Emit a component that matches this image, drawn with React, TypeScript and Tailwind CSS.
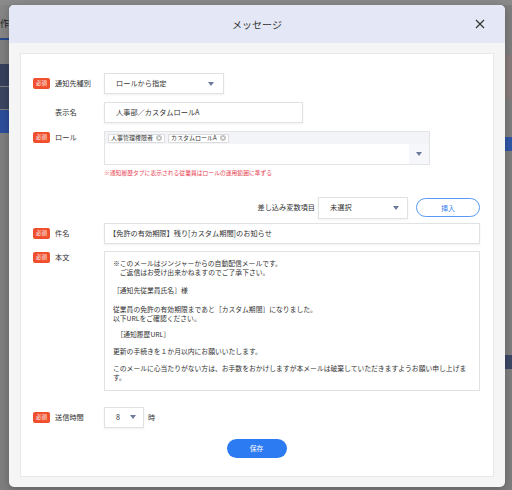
import React from "react";

const font = { fontFamily: '"Noto Sans CJK JP", "Noto Sans", sans-serif' };

function Caret() {
  return (
    <svg width="6" height="4" viewBox="0 0 6 4" className="shrink-0">
      <path d="M0 0 L6 0 L3 4 Z" fill="#6d7a9c" />
    </svg>
  );
}

function Badge() {
  return (
    <span className="inline-flex items-center justify-center w-[17px] h-[11px] rounded-[2px] bg-[#ef4f2d] text-white text-[5.5px] leading-none shrink-0">
      必須
    </span>
  );
}

function TagX() {
  return (
    <svg width="6" height="6" viewBox="0 0 6 6" className="shrink-0">
      <circle cx="3" cy="3" r="3" fill="#c4c4c4" />
      <path d="M1.8 1.8 L4.2 4.2 M4.2 1.8 L1.8 4.2" stroke="#fff" strokeWidth="0.8" />
    </svg>
  );
}

function Tag({ text }: { text: string }) {
  return (
    <span className="inline-flex items-center gap-[3px] h-[9px] px-[2px] bg-white border border-[#dcdcdc] rounded-[1px] text-[6px] leading-none text-[#333]">
      {text}
      <TagX />
    </span>
  );
}

const inputCls =
  "h-[21px] bg-white border border-[#e2e2e2] shadow-[0_1px_2px_rgba(0,0,0,0.06)] flex items-center text-[7.2px] text-[#333]";

export default function App() {
  return (
    <div className="relative w-[512px] h-[490px] overflow-hidden bg-[#7e7e7e]" style={font}>
      {/* underlying page, dimmed */}
      <div className="absolute left-0 top-0 w-[512px] h-[5px] bg-[#8a8a8a]" />
      <div className="absolute left-0 top-[5px] w-[9px] h-[33px] bg-[#858585] text-[9px] text-[#222] leading-none pt-[14px]">作</div>
      <div className="absolute left-0 top-[38px] w-[9px] h-[2px] bg-[#26498a]" />
      <div className="absolute left-0 top-[64px] w-[9px] h-[22px] bg-[#36405c]" />
      <div className="absolute left-0 top-[87px] w-[9px] h-[22px] bg-[#3b4561]" />
      <div className="absolute left-0 top-[110px] w-[9px] h-[23px] bg-[#2c4d9b]" />
      <div className="absolute right-0 top-[55px] w-[7px] h-[45px] bg-[#877b7b]" />
      <div className="absolute right-0 top-[137px] w-[7px] h-[14px] bg-[#2f55a6]" />
      <div className="absolute right-0 top-[355px] w-[7px] h-[14px] bg-[#3b4766]" />

      {/* modal */}
      <div className="absolute left-[9px] top-[5px] w-[496px] h-[482px] rounded-[5px] overflow-hidden bg-[#f5f5f5] shadow-[0_2px_8px_rgba(0,0,0,0.25)] flex flex-col">
        <div className="h-[38px] bg-[#e4e7f5] grid grid-cols-[40px_1fr_40px] items-center shrink-0">
          <div />
          <div className="text-center text-[10px] text-[#333]">メッセージ</div>
          <div className="flex justify-center pr-[10px]">
            <svg width="10" height="10" viewBox="0 0 10 10">
              <path d="M1 1 L9 9 M9 1 L1 9" stroke="#333" strokeWidth="1.2" />
            </svg>
          </div>
        </div>

        <div className="flex-1 px-[11px] pt-[10px] pb-[10px] flex">
          <div className="flex-1 bg-white border border-[#e8e8e8] pl-[12px] pr-[13px] pt-[19px] flex flex-col text-[#333]">
            {/* 通知先種別 */}
            <div className="grid grid-cols-[71px_1fr] items-center">
              <div className="flex items-center gap-[5px]">
                <Badge />
                <span className="text-[7.2px]">通知先種別</span>
              </div>
              <div className={inputCls + " w-[120px] justify-between pl-[11px] pr-[9px]"}>
                <span>ロールから指定</span>
                <Caret />
              </div>
            </div>

            {/* 表示名 */}
            <div className="grid grid-cols-[71px_1fr] items-center mt-[8px]">
              <div className="pl-[22px] text-[7.2px]">表示名</div>
              <div className={inputCls + " w-[199px] pl-[11px]"}>人事部／カスタムロールA</div>
            </div>

            {/* ロール */}
            <div className="grid grid-cols-[71px_1fr] items-start mt-[8px]">
              <div className="flex items-center gap-[5px] pt-[1px]">
                <Badge />
                <span className="text-[7.2px]">ロール</span>
              </div>
              <div>
                <div className="w-[326px] h-[34px] border border-[#e4e4e4] flex flex-col">
                  <div className="h-[12px] bg-[#f3f4f8] flex items-center gap-[3px] pl-[3px]">
                    <Tag text="人事管理権限者" />
                    <Tag text="カスタムロールA" />
                  </div>
                  <div className="flex-1 flex">
                    <div className="flex-1 bg-white" />
                    <div className="w-[20px] bg-[#f6f7fa] flex items-center justify-center">
                      <Caret />
                    </div>
                  </div>
                </div>
                <div className="mt-[5px] text-[5.8px] text-[#e8424f] leading-none">
                  ※通知履歴タブに表示される従業員はロールの運用範囲に準ずる
                </div>
              </div>
            </div>

            {/* 差し込み変数項目 */}
            <div className="mt-[21px] flex items-center justify-end gap-[3px]">
              <span className="text-[7.2px]">差し込み変数項目</span>
              <div className={inputCls + " w-[90px] h-[22px] justify-between pl-[11px] pr-[8px]"}>
                <span>未選択</span>
                <Caret />
              </div>
              <button className="ml-[5px] w-[64px] h-[19px] rounded-full border border-[#5a98f4] text-[#3b82f0] text-[7px] bg-white">
                挿入
              </button>
            </div>

            {/* 件名 */}
            <div className="grid grid-cols-[71px_1fr] items-center mt-[4px]">
              <div className="flex items-center gap-[5px]">
                <Badge />
                <span className="text-[7.2px]">件名</span>
              </div>
              <div className={inputCls + " pl-[4px]"}>【免許の有効期限】残り[カスタム期間]のお知らせ</div>
            </div>

            {/* 本文 */}
            <div className="grid grid-cols-[71px_1fr] items-start mt-[7px]">
              <div className="flex items-center gap-[5px] pt-[1px]">
                <Badge />
                <span className="text-[7.2px]">本文</span>
              </div>
              <div className="h-[140px] border border-[#e2e2e2] bg-white pl-[8px] pr-[6px] pt-[7px] text-[6.8px] leading-[9.3px] text-[#333]">
                <p>※このメールはジンジャーからの自動配信メールです。</p>
                <p>　ご返信はお受け出来かねますのでご了承下さい。</p>
                <p className="mt-[9px]">［通知先従業員氏名］様</p>
                <p className="mt-[9px]">従業員の免許の有効期限まであと［カスタム期間］になりました。</p>
                <p>以下URLをご確認ください。</p>
                <p className="mt-[7px]">　［通知履歴URL］</p>
                <p className="mt-[7px]">更新の手続きを１か月以内にお願いいたします。</p>
                <p className="mt-[8px]">
                  このメールに心当たりがない方は、お手数をおかけしますが本メールは破棄していただきますようお願い申し上げま
                  <br />
                  す。
                </p>
              </div>
            </div>

            {/* 送信時間 */}
            <div className="grid grid-cols-[71px_1fr] items-center mt-[16px]">
              <div className="flex items-center gap-[5px]">
                <Badge />
                <span className="text-[7.2px]">送信時間</span>
              </div>
              <div className="flex items-center gap-[4px]">
                <div className={inputCls + " w-[40px] h-[20px] justify-between pl-[11px] pr-[7px]"}>
                  <span>8</span>
                  <Caret />
                </div>
                <span className="text-[7.2px]">時</span>
              </div>
            </div>

            {/* 保存 */}
            <div className="flex justify-center mt-[11px]">
              <button className="w-[60px] h-[19px] rounded-full bg-[#2c7bf2] text-white text-[6.8px]">
                保存
              </button>
            </div>
          </div>
        </div>
      </div>
    </div>
  );
}
